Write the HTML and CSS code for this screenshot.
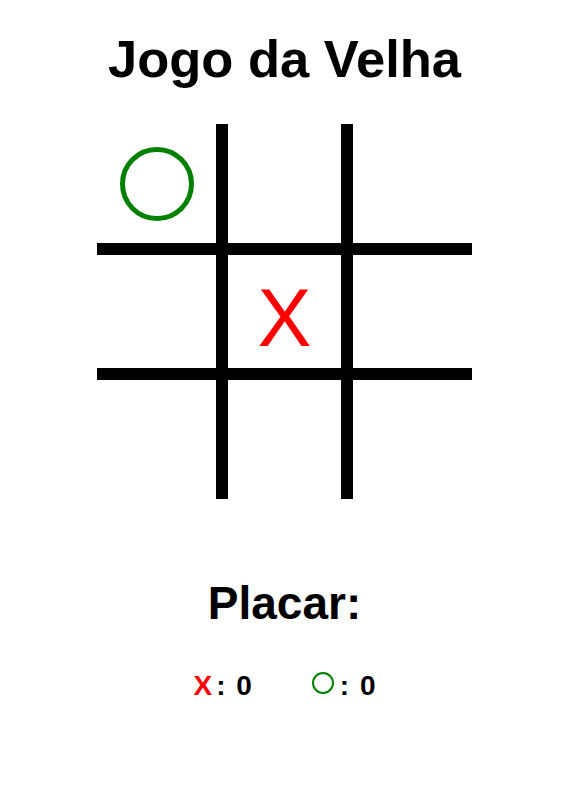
FILE: index.html
```html
<!DOCTYPE html>
<html lang="pt">
<head>
<meta charset="utf-8">
<title>Jogo da Velha</title>
<link rel="stylesheet" href="styles.css">
</head>
<body>
<main class="game">
  <h1 class="title">Jogo da Velha</h1>
  <div class="board">
    <div class="cell"><span class="mark-o"></span></div>
    <div class="cell"></div>
    <div class="cell"></div>
    <div class="cell"></div>
    <div class="cell"><span class="mark-x">X</span></div>
    <div class="cell"></div>
    <div class="cell"></div>
    <div class="cell"></div>
    <div class="cell"></div>
  </div>
  <h2 class="score-title">Placar:</h2>
  <div class="score">
    <span class="score-item"><span class="score-x">X</span>: <span class="score-num">0</span></span>
    <span class="score-item"><span class="score-o"></span>: <span class="score-num">0</span></span>
  </div>
</main>
</body>
</html>
```

FILE: styles.css
```css
body {
  margin: 8px 5px 8px 8px;
  background: #ffffff;
  color: #000000;
  font-family: "Liberation Sans", Arial, sans-serif;
}

.game {
  display: flex;
  flex-direction: column;
  align-items: center;
}

.title {
  margin: 21px 0 0;
  font-size: 52.5px;
  line-height: 60px;
  font-weight: bold;
}

.board {
  margin-top: 35px;
  display: grid;
  grid-template-columns: repeat(3, 125px);
  grid-template-rows: repeat(3, 125px);
}

.cell {
  box-sizing: border-box;
  border: 0 solid #000000;
  display: flex;
  align-items: center;
  justify-content: center;
}

.cell:nth-child(-n+6) { border-bottom-width: 6px; }
.cell:nth-child(n+4) { border-top-width: 6px; }
.cell:not(:nth-child(3n)) { border-right-width: 6px; }
.cell:not(:nth-child(3n+1)) { border-left-width: 6px; }

.mark-o {
  width: 64px;
  height: 64px;
  border: 5px solid #008000;
  border-radius: 50%;
}

.mark-x {
  margin-top: 13px;
  font-size: 81px;
  line-height: 1;
  color: #ff0000;
}

.score-title {
  margin: 76px 0 0;
  font-size: 46px;
  line-height: 56px;
  font-weight: bold;
}

.score {
  margin-top: 39px;
  display: flex;
  justify-content: center;
  gap: 60px;
  font-size: 28px;
  line-height: 32px;
  font-weight: bold;
}

.score-x {
  color: #ff0000;
  margin-right: 4px;
}

.score-o {
  display: inline-block;
  width: 18px;
  height: 18px;
  border: 2px solid #008000;
  border-radius: 50%;
  margin-right: 6px;
  vertical-align: 1px;
}

.score-num {
  margin-left: 3px;
}
```
